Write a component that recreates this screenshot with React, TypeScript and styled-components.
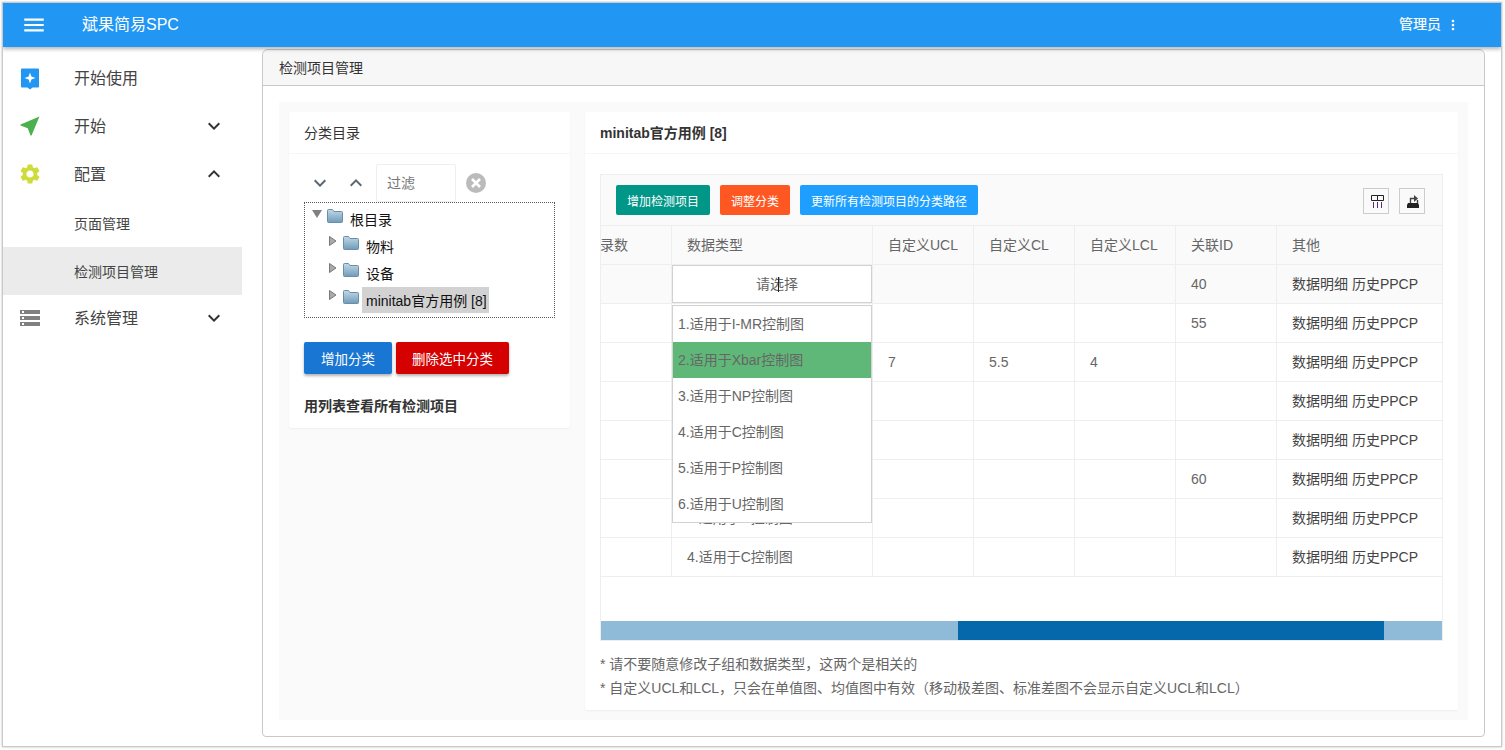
import React from "react";
import styled, { createGlobalStyle } from "styled-components";

const GlobalStyle = createGlobalStyle`
  * { box-sizing: border-box; }
  html, body { margin: 0; padding: 0; background: #fff; }
  body {
    font-family: "Liberation Sans", "Noto Sans CJK SC", sans-serif;
    font-size: 14px;
    color: #333;
  }
`;

const Frame = styled.div`
  margin: 2px;
  width: 1500px;
  height: 745px;
  border: 1px solid #c9c9c9;
  box-shadow: 0 0 2px rgba(0, 0, 0, 0.3);
  display: flex;
  flex-direction: column;
  overflow: hidden;
`;
const TopBar = styled.header`
  height: 44px;
  flex: none;
  background: #2196f3;
  color: #fff;
  display: flex;
  align-items: center;
  padding: 0 40px 0 18px;
  position: relative;
  z-index: 2;
  box-shadow: 0 2px 4px rgba(0, 0, 0, 0.3);
`;
const MenuButton = styled.svg`
  width: 26px;
  height: 26px;
  fill: #fff;
  margin-right: 35px;
`;
const Title = styled.div`
  flex: 1;
  font-size: 16px;
  margin-top: -5px;
`;
const UserName = styled.div`
  font-size: 14px;
  margin-top: -4px;
  margin-right: 4px;
  -webkit-text-stroke: 0.2px #fff;
`;
const MoreIcon = styled.svg`
  width: 16px;
  height: 16px;
  fill: #fff;
`;
const Content = styled.div`
  flex: 1;
  display: flex;
  min-height: 0;
`;
const Sidebar = styled.nav`
  width: 239px;
  flex: none;
  padding-top: 7px;
`;
const NavItem = styled.div`
  height: 48px;
  display: flex;
  align-items: center;
  padding: 0 16px 0 17px;
  font-size: 16px;
  color: #444;
`;
const NavIcon = styled.svg<{ $color: string }>`
  width: 20px;
  height: 20px;
  fill: ${(p) => p.$color};
  flex: none;
  margin-right: 34px;
  margin-top: -1px;
  overflow: visible;
`;
const NavLabel = styled.span`
  flex: 1;
  margin-top: -2px;
`;
const Chevron = styled.svg`
  width: 24px;
  height: 24px;
  fill: #333;
`;
const SubList = styled.div`
  margin-top: 1px;
  margin-bottom: -1px;
`;
const SubItem = styled.div<{ $active?: boolean }>`
  height: 48px;
  display: flex;
  align-items: center;
  padding: 0 0 1px 71px;
  font-size: 14px;
  color: #444;
  background: ${(p) => (p.$active ? "#ebebeb" : "transparent")};
`;
const Main = styled.main`
  flex: 1;
  min-width: 0;
  padding: 2px 16px 9px 20px;
  display: flex;
`;
const PageCard = styled.section`
  flex: 1;
  border: 1px solid #c8c8c8;
  border-radius: 6px 6px 4px 4px;
  display: flex;
  flex-direction: column;
  min-width: 0;
`;
const PageHeader = styled.div`
  height: 36px;
  flex: none;
  background: #f7f7f7;
  border-bottom: 1px solid #c8c8c8;
  border-radius: 6px 6px 0 0;
  display: flex;
  align-items: center;
  padding: 0 0 2px 16px;
  font-size: 14px;
  color: #333;
`;
const PageBody = styled.div`
  flex: 1;
  padding: 16px;
  display: flex;
  min-height: 0;
`;
const Shade = styled.div`
  flex: 1;
  background: #fafafa;
  padding: 10px;
  display: flex;
  gap: 15px;
  min-width: 0;
`;
const Card = styled.div`
  background: #fff;
  border-radius: 2px;
  box-shadow: 0 1px 2px rgba(0, 0, 0, 0.05);
`;
const SideCard = styled(Card)`
  width: 281px;
  flex: none;
  align-self: flex-start;
  height: 316px;
`;
const TableCard = styled(Card)`
  flex: 1;
  min-width: 0;
`;
const CardHeader = styled.div<{ $bold?: boolean }>`
  height: 42px;
  line-height: 42px;
  padding: 0 15px;
  border-bottom: 1px solid #f6f6f6;
  font-size: 14px;
  font-weight: ${(p) => (p.$bold ? 700 : 400)};
  color: #333;
`;
const SideBody = styled.div`
  padding: 9px 15px;
`;
const FilterRow = styled.div`
  height: 39px;
  display: flex;
  align-items: center;
  padding-left: 4px;
`;
const ArrowIcon = styled.svg`
  width: 24px;
  height: 24px;
  fill: #5b6670;
  margin-right: 12px;
`;
const FilterInput = styled.div`
  width: 80px;
  height: 38px;
  margin-left: -4px;
  border: 1px solid #eee;
  border-radius: 2px;
  padding-left: 10px;
  line-height: 36px;
  color: #777;
  font-size: 14px;
`;
const ClearIcon = styled.svg`
  width: 20px;
  height: 20px;
  margin-left: 10px;
`;
const TreeBox = styled.div`
  height: 116px;
  border: 1px dotted #555;
  padding-top: 3px;
`;
const TreeRow = styled.div<{ $depth: number }>`
  height: 27px;
  display: flex;
  padding-left: ${(p) => 7 + p.$depth * 16}px;
`;
const Switch = styled.svg`
  width: 10px;
  height: 10px;
  margin-top: 3px;
  margin-right: 5px;
  flex: none;
`;
const Folder = styled.svg`
  width: 16px;
  height: 15px;
  margin-top: 2px;
  margin-right: 3px;
  flex: none;
`;
const TreeLabel = styled.span<{ $selected?: boolean }>`
  height: 26px;
  line-height: 26px;
  padding: 1px 2px 0 4px;
  font-size: 14px;
  color: #111;
  background: ${(p) => (p.$selected ? "#d2d2d2" : "transparent")};
`;
const ButtonRow = styled.div`
  display: flex;
  gap: 4px;
  margin-top: 24px;
`;
const RaisedButton = styled.button<{ $color: string; $width: number }>`
  width: ${(p) => p.$width}px;
  height: 32px;
  padding: 0;
  border: none;
  border-radius: 2px;
  background: ${(p) => p.$color};
  color: #fff;
  font: inherit;
  font-size: 13.5px;
  box-shadow: 0 2px 3px rgba(0, 0, 0, 0.3);
`;
const AllLink = styled.div`
  margin-top: 22px;
  line-height: 20px;
  font-size: 14px;
  font-weight: 700;
  color: #333;
`;
const TableBody = styled.div`
  padding: 20px 15px 0;
`;
const DataTable = styled.div`
  border: 1px solid #eee;
`;
const Toolbar = styled.div`
  height: 51px;
  border-bottom: 1px solid #eee;
  background: #fafafa;
  display: flex;
  align-items: flex-start;
  gap: 10px;
  padding: 10px 17px 0 15px;
`;
const ToolButton = styled.button<{ $color: string }>`
  height: 30px;
  padding: 0 11px;
  border: none;
  border-radius: 2px;
  background: ${(p) => p.$color};
  color: #fff;
  font: inherit;
  font-size: 12px;
`;
const ToolIcons = styled.div`
  margin-left: auto;
  margin-top: 3px;
  display: flex;
  gap: 10px;
`;
const ToolIcon = styled.div`
  width: 26px;
  height: 26px;
  border: 1px solid #ccc;
  display: flex;
  align-items: center;
  padding-left: 6px;
`;
const ToolSvg = styled.svg`
  width: 16px;
  height: 16px;
  flex: none;
`;
const Clip = styled.div`
  height: 395px;
  overflow: hidden;
`;
const Rows = styled.div`
  margin-left: -30px;
  width: 871px;
`;
const Row = styled.div<{ $head?: boolean; $hover?: boolean }>`
  display: grid;
  grid-template-columns: 101px 201px 101px 101px 101px 101px 165px;
  height: 39px;
  border-bottom: 1px solid #eee;
  background: ${(p) => (p.$head || p.$hover ? "#fafafa" : "#fff")};
`;
const Cell = styled.div<{ $dark?: boolean }>`
  position: relative;
  border-right: 1px solid #eee;
  padding: 0 15px;
  line-height: 38px;
  white-space: nowrap;
  font-size: 14px;
  color: ${(p) => (p.$dark ? "#444" : "#666")};
  &:last-child {
    border-right: none;
  }
`;
const SelectBox = styled.div`
  position: absolute;
  left: 0;
  top: 0;
  z-index: 1;
  width: 200px;
  height: 38px;
  background: #fff;
  border: 1px solid #d2d2d2;
  padding-left: 10px;
  text-align: center;
  line-height: 36px;
  color: #666;
`;
const TextCursor = styled.span`
  position: absolute;
  left: 105px;
  top: 11px;
  width: 1px;
  height: 15px;
  background: #222;
`;
const OptionList = styled.div`
  position: absolute;
  left: 0;
  top: 40px;
  z-index: 1;
  width: 200px;
  height: 218px;
  background: #fff;
  border: 1px solid #d2d2d2;
`;
const Option = styled.div<{ $selected?: boolean }>`
  height: 36px;
  line-height: 36px;
  padding-left: 5px;
  color: #666;
  background: ${(p) => (p.$selected ? "#5fb878" : "transparent")};
`;
const ScrollTrack = styled.div`
  height: 19px;
  margin-top: 0;
  background: #8fbbd9;
  padding-left: 357px;
`;
const ScrollThumb = styled.div`
  width: 426px;
  height: 100%;
  background: #0568ab;
`;
const Notes = styled.div`
  margin-top: 11px;
  line-height: 24px;
  font-size: 14px;
  color: #666;
`;

const MENU = "M3 18h18v-2H3v2zm0-5h18v-2H3v2zm0-7v2h18V6H3z";
const MORE =
  "M12 8c1.1 0 2-.9 2-2s-.9-2-2-2-2 .9-2 2 .9 2 2 2zm0 2c-1.1 0-2 .9-2 2s.9 2 2 2 2-.9 2-2-.9-2-2-2zm0 6c-1.1 0-2 .9-2 2s.9 2 2 2 2-.9 2-2-.9-2-2-2z";
const DOWN = "M16.59 8.59L12 13.17 7.41 8.59 6 10l6 6 6-6z";
const UP = "M12 8l-6 6 1.41 1.41L12 10.83l4.59 4.58L18 14z";
const GEAR =
  "M19.14 12.94c.04-.3.06-.61.06-.94 0-.32-.02-.64-.07-.94l2.03-1.58c.18-.14.23-.41.12-.61l-1.92-3.32c-.12-.22-.37-.29-.59-.22l-2.39.96c-.5-.38-1.03-.7-1.62-.94l-.36-2.54c-.04-.24-.24-.41-.48-.41h-3.84c-.24 0-.43.17-.47.41l-.36 2.54c-.59.24-1.13.57-1.62.94l-2.39-.96c-.22-.08-.47 0-.59.22L2.74 8.87c-.12.21-.08.47.12.61l2.03 1.58c-.05.3-.09.63-.09.94s.02.64.07.94l-2.03 1.58c-.18.14-.23.41-.12.61l1.92 3.32c.12.22.37.29.59.22l2.39-.96c.5.38 1.03.7 1.62.94l.36 2.54c.05.24.24.41.48.41h3.84c.24 0 .44-.17.47-.41l.36-2.54c.59-.24 1.13-.56 1.62-.94l2.39.96c.22.08.47 0 .59-.22l1.92-3.32c.12-.22.07-.47-.12-.61l-2.01-1.58zM12 15.6c-1.98 0-3.6-1.62-3.6-3.6s1.62-3.6 3.6-3.6 3.6 1.62 3.6 3.6-1.62 3.6-3.6 3.6z";
const STORAGE =
  "M2 20h20v-4H2v4zm2-3h2v2H4v-2zM2 4v4h20V4H2zm4 3H4V5h2v2zm-4 7h20v-4H2v4zm2-3h2v2H4v-2z";

const Icon24 = ({ d }: { d: string }) => <path d={d} />;

const FolderIcon = ({ id }: { id: string }) => (
  <Folder viewBox="0 0 16 15">
    <defs>
      <linearGradient id={id} x1="0" y1="0" x2="0" y2="1">
        <stop offset="0" stopColor="#c3d8e8" />
        <stop offset="1" stopColor="#6f9cba" />
      </linearGradient>
    </defs>
    <path
      d="M.5 13.5v-11a1 1 0 0 1 1-1h4l1.5 2h7.5a1 1 0 0 1 1 1v9a1 1 0 0 1-1 1h-13a1 1 0 0 1-1-1z"
      fill={`url(#${id})`}
      stroke="#6a8ea6"
    />
  </Folder>
);

const TreeNode = ({
  id,
  label,
  depth,
  open,
  selected,
}: {
  id: string;
  label: string;
  depth: number;
  open?: boolean;
  selected?: boolean;
}) => (
  <TreeRow $depth={depth}>
    <Switch viewBox="0 0 10 10">
      {open ? (
        <path d="M0 1h10L5 9z" fill="#808080" />
      ) : (
        <path d="M1.5 .5l6.5 4.5-6.5 4.5z" fill="#aaa" stroke="#777" />
      )}
    </Switch>
    <FolderIcon id={id} />
    <TreeLabel $selected={selected}>{label}</TreeLabel>
  </TreeRow>
);

const OTHER = "数据明细 历史PPCP";
const rows = [
  { type: "", ucl: "", cl: "", lcl: "", rel: "40", hover: true },
  { type: "1.适用于I-MR控制图", ucl: "", cl: "", lcl: "", rel: "55" },
  { type: "2.适用于Xbar控制图", ucl: "7", cl: "5.5", lcl: "4", rel: "" },
  { type: "3.适用于NP控制图", ucl: "", cl: "", lcl: "", rel: "" },
  { type: "4.适用于C控制图", ucl: "", cl: "", lcl: "", rel: "" },
  { type: "5.适用于P控制图", ucl: "", cl: "", lcl: "", rel: "60" },
  { type: "4.适用于C控制图", ucl: "", cl: "", lcl: "", rel: "" },
  { type: "4.适用于C控制图", ucl: "", cl: "", lcl: "", rel: "" },
];
const options = [
  "1.适用于I-MR控制图",
  "2.适用于Xbar控制图",
  "3.适用于NP控制图",
  "4.适用于C控制图",
  "5.适用于P控制图",
  "6.适用于U控制图",
];

const App = () => (
  <>
    <GlobalStyle />
    <Frame>
      <TopBar>
        <MenuButton viewBox="0 0 24 24">
          <Icon24 d={MENU} />
        </MenuButton>
        <Title>斌果简易SPC</Title>
        <UserName>管理员</UserName>
        <MoreIcon viewBox="0 0 24 24">
          <Icon24 d={MORE} />
        </MoreIcon>
      </TopBar>
      <Content>
        <Sidebar>
          <NavItem>
            <NavIcon $color="#2196f3" viewBox="0 0 20 20">
              <path d="M2 0.5h16a1 1 0 0 1 1 1v17a1 1 0 0 1-1 1h-5.5l-2.5 2-2.5-2H2a1 1 0 0 1-1-1v-17a1 1 0 0 1 1-1z" />
              <path
                d="M10 4.5l1.4 4.1 4.1 1.4-4.1 1.4L10 15.5l-1.4-4.1L4.5 10l4.1-1.4z"
                fill="#fff"
              />
            </NavIcon>
            <NavLabel>开始使用</NavLabel>
          </NavItem>
          <NavItem>
            <NavIcon $color="#4caf50" viewBox="2.5 2.5 19 19">
              <path d="M21 3L3 10.53v.98l6.84 2.65L12.48 21h.98L21 3z" />
            </NavIcon>
            <NavLabel>开始</NavLabel>
            <Chevron viewBox="0 0 24 24">
              <Icon24 d={DOWN} />
            </Chevron>
          </NavItem>
          <NavItem>
            <NavIcon $color="#cddc39" viewBox="2.4 2 19.2 20">
              <path d={GEAR} />
            </NavIcon>
            <NavLabel>配置</NavLabel>
            <Chevron viewBox="0 0 24 24">
              <Icon24 d={UP} />
            </Chevron>
          </NavItem>
          <SubList>
            <SubItem>页面管理</SubItem>
            <SubItem $active>检测项目管理</SubItem>
          </SubList>
          <NavItem>
            <NavIcon $color="#808080" viewBox="2 4 20 16">
              <path d={STORAGE} />
            </NavIcon>
            <NavLabel>系统管理</NavLabel>
            <Chevron viewBox="0 0 24 24">
              <Icon24 d={DOWN} />
            </Chevron>
          </NavItem>
        </Sidebar>
        <Main>
          <PageCard>
            <PageHeader>检测项目管理</PageHeader>
            <PageBody>
              <Shade>
                <SideCard>
                  <CardHeader>分类目录</CardHeader>
                  <SideBody>
                    <FilterRow>
                      <ArrowIcon viewBox="0 0 24 24">
                        <Icon24 d={DOWN} />
                      </ArrowIcon>
                      <ArrowIcon viewBox="0 0 24 24">
                        <Icon24 d={UP} />
                      </ArrowIcon>
                      <FilterInput>过滤</FilterInput>
                      <ClearIcon viewBox="0 0 20 20">
                        <circle cx="10" cy="10" r="10" fill="#bbb" />
                        <path
                          d="M6 6l8 8M14 6l-8 8"
                          stroke="#fff"
                          strokeWidth="2.6"
                        />
                      </ClearIcon>
                    </FilterRow>
                    <TreeBox>
                      <TreeNode id="f0" label="根目录" depth={0} open />
                      <TreeNode id="f1" label="物料" depth={1} />
                      <TreeNode id="f2" label="设备" depth={1} />
                      <TreeNode
                        id="f3"
                        label="minitab官方用例 [8]"
                        depth={1}
                        selected
                      />
                    </TreeBox>
                    <ButtonRow>
                      <RaisedButton $color="#1976d2" $width={88}>
                        增加分类
                      </RaisedButton>
                      <RaisedButton $color="#d50000" $width={113}>
                        删除选中分类
                      </RaisedButton>
                    </ButtonRow>
                    <AllLink>用列表查看所有检测项目</AllLink>
                  </SideBody>
                </SideCard>
                <TableCard>
                  <CardHeader $bold>minitab官方用例 [8]</CardHeader>
                  <TableBody>
                    <DataTable>
                      <Toolbar>
                        <ToolButton $color="#009688">增加检测项目</ToolButton>
                        <ToolButton $color="#ff5722">调整分类</ToolButton>
                        <ToolButton $color="#1e9fff">
                          更新所有检测项目的分类路径
                        </ToolButton>
                        <ToolIcons>
                          <ToolIcon>
                            <ToolSvg viewBox="0 0 16 16">
                              <path
                                d="M1.5 2.5h6v5h-6zM7.5 2.5h6v5h-6z"
                                fill="none"
                                stroke="#222"
                              />
                              <path
                                d="M3.5 9v6M7.5 9v6M11.5 9v6"
                                fill="none"
                                stroke="#5a2a80"
                              />
                            </ToolSvg>
                          </ToolIcon>
                          <ToolIcon>
                            <ToolSvg viewBox="0 0 16 16">
                              <path d="M2 10h10l1 2v3H1v-3z" fill="#222" />
                              <path
                                d="M4.5 10V5.5h4M11.5 7v3"
                                fill="none"
                                stroke="#444"
                                strokeWidth="1.4"
                              />
                              <path d="M8 2l4 3.5L8 9z" fill="#444" />
                            </ToolSvg>
                          </ToolIcon>
                        </ToolIcons>
                      </Toolbar>
                      <Clip>
                        <Rows>
                          <Row $head>
                            <Cell>记录数</Cell>
                            <Cell>数据类型</Cell>
                            <Cell>自定义UCL</Cell>
                            <Cell>自定义CL</Cell>
                            <Cell>自定义LCL</Cell>
                            <Cell>关联ID</Cell>
                            <Cell>其他</Cell>
                          </Row>
                          {rows.map((r, i) => (
                            <Row key={i} $hover={r.hover}>
                              <Cell />
                              <Cell>
                                {i === 0 ? (
                                  <>
                                    <SelectBox>
                                      请选择
                                      <TextCursor />
                                    </SelectBox>
                                    <OptionList>
                                      {options.map((o, j) => (
                                        <Option key={o} $selected={j === 1}>
                                          {o}
                                        </Option>
                                      ))}
                                    </OptionList>
                                  </>
                                ) : (
                                  r.type
                                )}
                              </Cell>
                              <Cell>{r.ucl}</Cell>
                              <Cell>{r.cl}</Cell>
                              <Cell>{r.lcl}</Cell>
                              <Cell>{r.rel}</Cell>
                              <Cell $dark>{OTHER}</Cell>
                            </Row>
                          ))}
                        </Rows>
                      </Clip>
                      <ScrollTrack>
                        <ScrollThumb />
                      </ScrollTrack>
                    </DataTable>
                    <Notes>
                      <div>* 请不要随意修改子组和数据类型，这两个是相关的</div>
                      <div>
                        * 自定义UCL和LCL，只会在单值图、均值图中有效（移动极差图、标准差图不会显示自定义UCL和LCL）
                      </div>
                    </Notes>
                  </TableBody>
                </TableCard>
              </Shade>
            </PageBody>
          </PageCard>
        </Main>
      </Content>
    </Frame>
  </>
);

export default App;
